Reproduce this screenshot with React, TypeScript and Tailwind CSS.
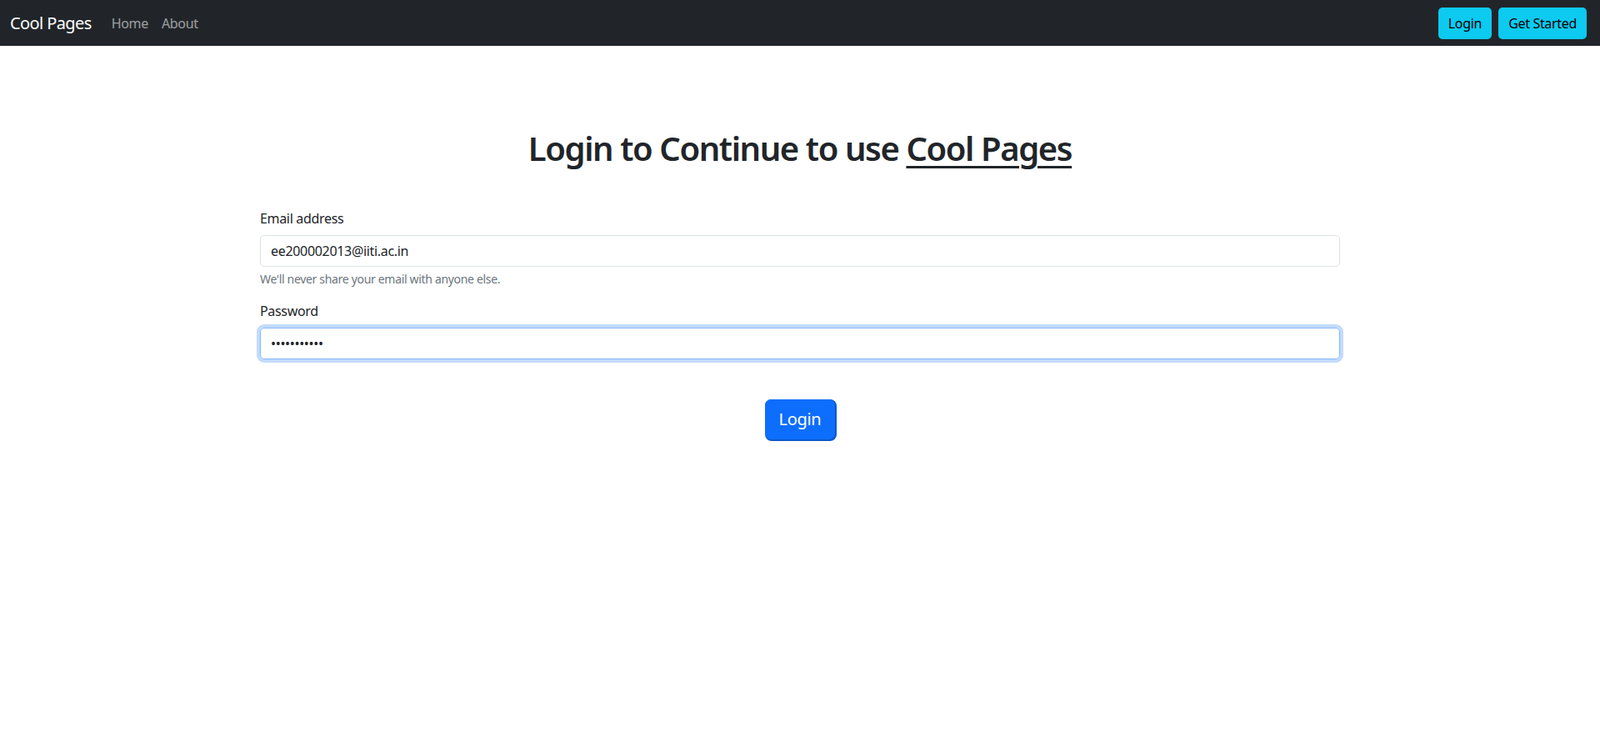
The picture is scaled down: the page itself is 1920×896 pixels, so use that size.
import * as React from 'react'

const font = { fontFamily: '"Segoe UI", "Noto Sans", "Liberation Sans", sans-serif' }

function Navbar() {
  return (
    <nav className="h-[55px] bg-[#212529] flex items-center justify-between pl-3 pr-4">
      <div className="flex items-center">
        <a className="text-white text-[20px] leading-[30px] mr-4 tracking-[-0.03em]">Cool Pages</a>
        <ul className="flex items-center">
          <li><a className="px-2 text-[16px] text-white/55">Home</a></li>
          <li><a className="px-2 text-[16px] text-white/55">About</a></li>
        </ul>
      </div>
      <div className="flex items-center gap-2">
        <button className="h-[38px] px-3 rounded-[5px] bg-[#0dcaf0] text-black text-[16px]">Login</button>
        <button className="h-[38px] px-3 rounded-[5px] bg-[#0dcaf0] text-black text-[16px]">Get Started</button>
      </div>
    </nav>
  )
}

export default function App() {
  return (
    <div className="min-h-screen bg-white text-[#212529] tracking-[-0.02em]" style={font}>
      <Navbar />
      <div className="mx-auto w-[1320px] px-3 pt-[51px]">
        <h1 className="text-center text-[40px] leading-[48px] font-semibold tracking-[-0.035em] mt-12 mb-12">
          Login to Continue to use <a className="underline decoration-[3px] underline-offset-[6px]">Cool Pages</a>
        </h1>
        <form>
          <div className="mb-4">
            <label className="block text-[16px] leading-6 mb-2">Email address</label>
            <input
              type="email"
              defaultValue="ee200002013@iiti.ac.in"
              className="block w-full h-[38px] px-3 text-[16px] border border-[#dee2e6] rounded-[5px] outline-none tracking-[-0.02em]"
            />
            <div className="mt-1 text-[14px] leading-[21px] text-[#6c757d]">We'll never share your email with anyone else.</div>
          </div>
          <div className="mb-4">
            <label className="block text-[16px] leading-6 mb-2">Password</label>
            <input
              type="password"
              defaultValue="12345678901"
              className="block w-full h-[38px] px-3 text-[16px] border border-[#86b7fe] rounded-[5px] outline-none shadow-[0_0_0_4px_rgba(13,110,253,0.25)]"
            />
          </div>
          <div className="flex justify-center pt-8">
            <button
              type="button"
              className="h-12 px-4 rounded-[7px] bg-[#0d6efd] text-white text-[20px] border border-[#0d6efd] shadow-[1px_1px_0_1px_#0a58ca]"
            >
              Login
            </button>
          </div>
        </form>
      </div>
    </div>
  )
}
